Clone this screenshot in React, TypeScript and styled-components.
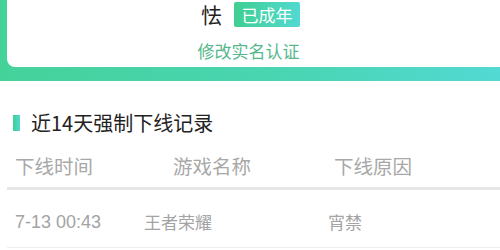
import React from "react";
import styled, { createGlobalStyle } from "styled-components";

const Global = createGlobalStyle`
  html, body { margin: 0; padding: 0; background: #ffffff; }
  body { font-family: "Noto Sans CJK SC", "Noto Sans", sans-serif; }
`;

const Hero = styled.div`
  background: linear-gradient(90deg, #45d29a 0%, #4ad5b4 60%, #52d9d4 100%);
  padding: 0 0 14px 7px;
`;

const Card = styled.div`
  background: #ffffff;
  height: 67px;
  border-bottom-left-radius: 8px;
  display: flex;
  flex-direction: column;
  align-items: center;
  padding-top: 2px;
  box-sizing: border-box;
`;

const NameRow = styled.div`
  display: flex;
  align-items: center;
  gap: 12px;
  height: 25px;
  margin-left: -6px;
`;

const Name = styled.span`
  font-size: 21px;
  color: #222222;
  line-height: 25px;
`;

const Badge = styled.span`
  display: inline-flex;
  align-items: center;
  justify-content: center;
  width: 66px;
  height: 25px;
  border-radius: 2px;
  background: linear-gradient(90deg, #40cf91 0%, #52d9d2 100%);
  color: #ffffff;
  font-size: 17px;
`;

const EditLink = styled.a`
  margin-top: 14px;
  margin-left: -10px;
  font-size: 17px;
  line-height: 20px;
  color: #55b88c;
  text-decoration: none;
`;

const Section = styled.div`
  margin-left: 7px;
`;

const TitleRow = styled.div`
  margin-top: 30px;
  display: flex;
  align-items: center;
  gap: 11px;
  padding-left: 6px;
  height: 24px;
`;

const TitleMark = styled.span`
  width: 7px;
  height: 16px;
  background: linear-gradient(90deg, #3fcf93, #52d9d2);
`;

const Title = styled.span`
  font-size: 20px;
  color: #222222;
  line-height: 24px;
`;

const Row = styled.div<{ $cols: string; $head?: boolean }>`
  display: grid;
  grid-template-columns: ${(p) => p.$cols};
  align-items: center;
  padding-left: 8px;
  height: ${(p) => (p.$head ? "55px" : "58px")};
  box-sizing: border-box;
  padding-top: ${(p) => (p.$head ? "10px" : "6px")};
  border-bottom: ${(p) => (p.$head ? "3px solid #e6e6e6" : "1px solid #eeeeee")};
  font-size: ${(p) => (p.$head ? "19.5px" : "17px")};
  color: ${(p) => (p.$head ? "#a8a8a8" : "#a3a3a3")};
  line-height: 24px;
`;

const Cell = styled.span`
  white-space: nowrap;
`;

const TimeCell = styled.span`
  white-space: nowrap;
  font-family: "Liberation Sans", "Noto Sans", sans-serif;
  font-size: 18px;
`;

export default function App() {
  return (
    <>
      <Global />
      <Hero>
        <Card>
          <NameRow>
            <Name>怯</Name>
            <Badge>已成年</Badge>
          </NameRow>
          <EditLink href="#">修改实名认证</EditLink>
        </Card>
      </Hero>
      <Section>
        <TitleRow>
          <TitleMark />
          <Title>近14天强制下线记录</Title>
        </TitleRow>
        <Row $head $cols="158px 161px 1fr">
          <Cell>下线时间</Cell>
          <Cell>游戏名称</Cell>
          <Cell>下线原因</Cell>
        </Row>
        <Row $cols="129px 184px 1fr">
          <TimeCell>7-13 00:43</TimeCell>
          <Cell>王者荣耀</Cell>
          <Cell>宵禁</Cell>
        </Row>
      </Section>
    </>
  );
}
